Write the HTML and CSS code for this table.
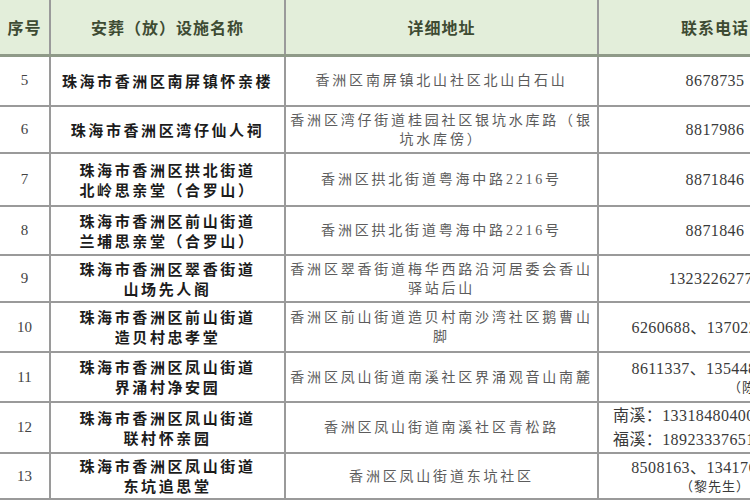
FILE: index.html
```html
<!DOCTYPE html>
<html lang="zh-CN">
<head>
<meta charset="utf-8">
<title>珠海市香洲区安葬（放）设施</title>
<link rel="stylesheet" href="styles.css">
</head>
<body>
<table class="tbl">
  <colgroup>
    <col class="c-no">
    <col class="c-name">
    <col class="c-addr">
    <col class="c-tel">
  </colgroup>
  <thead>
    <tr class="head">
      <th>序号</th>
      <th>安葬（放）设施名称</th>
      <th>详细地址</th>
      <th>联系电话</th>
    </tr>
  </thead>
  <tbody>
    <tr class="r5">
      <td class="no">5</td>
      <td class="name">珠海市香洲区南屏镇怀亲楼</td>
      <td class="addr">香洲区南屏镇北山社区北山白石山</td>
      <td class="tel">8678735</td>
    </tr>
    <tr class="r6">
      <td class="no">6</td>
      <td class="name">珠海市香洲区湾仔仙人祠</td>
      <td class="addr">香洲区湾仔街道桂园社区银坑水库路（银<br>坑水库傍）</td>
      <td class="tel">8817986</td>
    </tr>
    <tr class="r7">
      <td class="no">7</td>
      <td class="name">珠海市香洲区拱北街道<br>北岭思亲堂（合罗山）</td>
      <td class="addr">香洲区拱北街道粤海中路2216号</td>
      <td class="tel">8871846</td>
    </tr>
    <tr class="r8">
      <td class="no">8</td>
      <td class="name">珠海市香洲区前山街道<br>兰埔思亲堂（合罗山）</td>
      <td class="addr">香洲区拱北街道粤海中路2216号</td>
      <td class="tel">8871846</td>
    </tr>
    <tr class="r9">
      <td class="no">9</td>
      <td class="name">珠海市香洲区翠香街道<br>山场先人阁</td>
      <td class="addr">香洲区翠香街道梅华西路沿河居委会香山<br>驿站后山</td>
      <td class="tel">13232262770</td>
    </tr>
    <tr class="r10">
      <td class="no">10</td>
      <td class="name">珠海市香洲区前山街道<br>造贝村忠孝堂</td>
      <td class="addr">香洲区前山街道造贝村南沙湾社区鹅曹山<br>脚</td>
      <td class="tel">6260688、13702211331</td>
    </tr>
    <tr class="r11">
      <td class="no">11</td>
      <td class="name">珠海市香洲区凤山街道<br>界涌村净安园</td>
      <td class="addr">香洲区凤山街道南溪社区界涌观音山南麓</td>
      <td class="tel"><div>8611337、13544877866</div><div class="who-r">（陈先生）</div></td>
    </tr>
    <tr class="r12">
      <td class="no">12</td>
      <td class="name">珠海市香洲区凤山街道<br>联村怀亲园</td>
      <td class="addr">香洲区凤山街道南溪社区青松路</td>
      <td class="tel multi"><div>南溪：13318480400</div><div>福溪：18923337651</div></td>
    </tr>
    <tr class="r13">
      <td class="no">13</td>
      <td class="name">珠海市香洲区凤山街道<br>东坑追思堂</td>
      <td class="addr">香洲区凤山街道东坑社区</td>
      <td class="tel"><div>8508163、13417668863</div><div class="who">（黎先生）</div></td>
    </tr>
  </tbody>
</table>
</body>
</html>
```

FILE: styles.css
```css
html, body {
  margin: 0;
  padding: 0;
  background: #ffffff;
  overflow: hidden;
  width: 750px;
  height: 500px;
}

.tbl {
  border-collapse: collapse;
  table-layout: fixed;
  width: 832px;
  font-family: "Liberation Serif", "Noto Sans CJK SC", serif;
}

.c-no { width: 50px; }
.c-name { width: 235px; }
.c-addr { width: 313px; }
.c-tel { width: 234px; }

.tbl th,
.tbl td {
  border: 2px solid #9a9a9a;
  padding: 0 4px;
  text-align: center;
  vertical-align: middle;
  white-space: nowrap;
  overflow: hidden;
}

.tbl tr > :first-child { border-left: none; }
.tbl thead th { border-top: none; }

.tbl td + td,
.tbl th + th {
  border-left-color: #7d7d7d;
}

.head {
  height: 55px;
  background: #e3eeda;
}

.head th {
  font-family: "Noto Sans CJK SC", sans-serif;
  font-weight: 700;
  font-size: 16px;
  letter-spacing: 1px;
  color: #3e4b33;
  border-bottom: 3px solid #8f9a88;
}

.r5 { height: 51px; }
.r6 { height: 47px; }
.r7 { height: 53px; }
.r8 { height: 49px; }
.r9 { height: 47px; }
.r10 { height: 50px; }
.r11 { height: 50px; }
.r12 { height: 51px; }
.r13 { height: 46px; }

.no {
  font-size: 15px;
  color: #444;
}

.name {
  font-family: "Noto Sans CJK SC", sans-serif;
  font-weight: 700;
  font-size: 15px;
  line-height: 20px;
  letter-spacing: 2.6px;
  color: #1c1c1c;
  padding-left: 6px;
}

.addr {
  font-size: 14px;
  line-height: 19px;
  letter-spacing: 2.8px;
  color: #5c5c5c;
}

.tel {
  font-size: 16px;
  line-height: 21px;
  letter-spacing: 0.4px;
  color: #3a3a3a;
}

.tel .who {
  font-size: 13px;
  line-height: 18px;
  letter-spacing: 1px;
}

.tel .who-r {
  font-size: 13px;
  line-height: 18px;
  letter-spacing: 1px;
  text-align: left;
  padding-left: 125px;
}

.tel.multi {
  text-align: left;
  padding-left: 14px;
  line-height: 24px;
}
```
